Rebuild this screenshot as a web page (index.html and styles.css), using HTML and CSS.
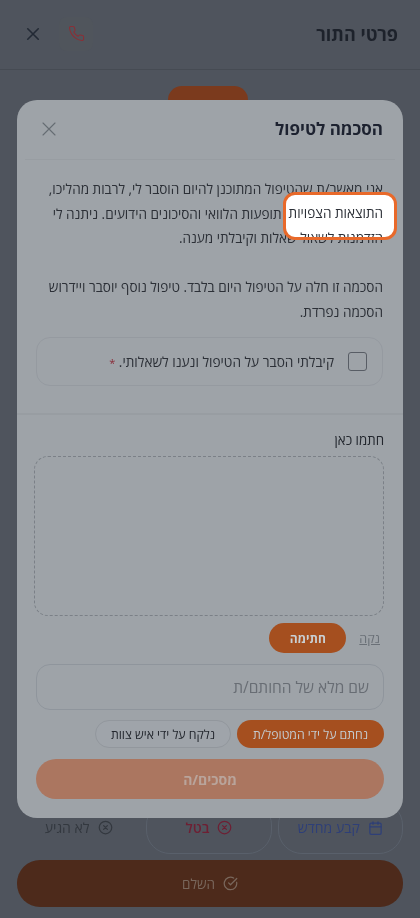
FILE: index.html
```html
<!DOCTYPE html>
<html lang="he" dir="rtl">
<head>
<meta charset="utf-8">
<title>פרטי התור</title>
<link rel="stylesheet" href="styles.css">
</head>
<body>
<div class="page">
  <header class="topbar">
    <h1 class="topbar-title">פרטי התור</h1>
    <div class="topbar-actions">
      <span class="phone-btn">
        <svg width="17" height="17" viewBox="0 0 24 24" fill="none" stroke="#8a2f36" stroke-width="1.5" stroke-linecap="round" stroke-linejoin="round"><path d="M22 16.92v3a2 2 0 0 1-2.18 2 19.8 19.8 0 0 1-8.63-3.07 19.5 19.5 0 0 1-6-6 19.8 19.8 0 0 1-3.07-8.67A2 2 0 0 1 4.11 2h3a2 2 0 0 1 2 1.72c.13.96.36 1.9.7 2.81a2 2 0 0 1-.45 2.11L8.09 9.91a16 16 0 0 0 6 6l1.27-1.27a2 2 0 0 1 2.11-.45c.91.34 1.85.57 2.81.7A2 2 0 0 1 22 16.92z"/></svg>
      </span>
      <svg class="close-top" width="14" height="14" viewBox="0 0 24 24" fill="none" stroke="#232a35" stroke-width="2.8" stroke-linecap="round"><path d="M3 3l18 18M21 3L3 21"/></svg>
    </div>
  </header>
  <main class="under">
    <div class="status-pill"></div>
    <div class="spacer"></div>
    <div class="action-row">
      <span class="action action-blue">
        <svg width="15" height="16" viewBox="0 0 24 24" fill="none" stroke="currentColor" stroke-width="2" stroke-linecap="round" stroke-linejoin="round"><rect x="3" y="4" width="18" height="18" rx="2"/><path d="M16 2v4M8 2v4M3 10h18"/></svg>
        קבע מחדש
      </span>
      <span class="action action-red">
        <svg width="15" height="15" viewBox="0 0 24 24" fill="none" stroke="currentColor" stroke-width="2" stroke-linecap="round"><circle cx="12" cy="12" r="10"/><path d="M15 9l-6 6M9 9l6 6"/></svg>
        בטל
      </span>
      <span class="action action-plain">
        <svg width="15" height="15" viewBox="0 0 24 24" fill="none" stroke="currentColor" stroke-width="2" stroke-linecap="round"><circle cx="12" cy="12" r="10"/><path d="M15 9l-6 6M9 9l6 6"/></svg>
        לא הגיע
      </span>
    </div>
    <div class="pay-btn">
      <svg width="15" height="15" viewBox="0 0 24 24" fill="none" stroke="currentColor" stroke-width="2" stroke-linecap="round" stroke-linejoin="round"><path d="M21.8 10A10 10 0 1 1 17 3.3"/><path d="M9 11l3 3L22 4"/></svg>
      השלם
    </div>
  </main>

  <section class="modal">
    <div class="modal-head">
      <h2 class="modal-title">הסכמה לטיפול</h2>
      <svg width="16" height="16" viewBox="0 0 24 24" fill="none" stroke="#666c73" stroke-width="1.7" stroke-linecap="round"><path d="M3 3l18 18M21 3L3 21"/></svg>
    </div>
    <div class="consent">
      <p class="consent-text">אני מאשר/ת שהטיפול המתוכנן להיום הוסבר לי, לרבות מהליכו, התוצאות הצפויות, תופעות הלוואי והסיכונים הידועים. ניתנה לי הזדמנות לשאול שאלות וקיבלתי מענה.</p>
      <p class="consent-text">הסכמה זו חלה על הטיפול היום בלבד. טיפול נוסף יוסבר ויידרוש הסכמה נפרדת.</p>
      <label class="check-card">
        <span class="checkbox"></span>
        <span class="check-label">קיבלתי הסבר על הטיפול ונענו לשאלותי. <span class="star">*</span></span>
      </label>
    </div>
    <div class="sign">
      <div class="sign-label">חתמו כאן</div>
      <div class="sign-pad"></div>
      <div class="sign-actions">
        <span class="clear">נקה</span>
        <span class="sign-btn">חתימה</span>
      </div>
      <div class="name-input">שם מלא של החותם/ת</div>
      <div class="chips">
        <span class="chip chip-on">נחתם על ידי המטופל/ת</span>
        <span class="chip chip-off">נלקח על ידי איש צוות</span>
      </div>
      <div class="agree">מסכים/ה</div>
    </div>
  </section>

  <div class="spotlight">
    <div class="spotlight-text">התוצאות הצפויות<br>הזדמנות לשאול</div>
  </div>
</div>
</body>
</html>
```
FILE: styles.css
```css
* { box-sizing: border-box; margin: 0; padding: 0; }
html, body { width: 420px; height: 918px; overflow: hidden; }
body {
  font-family: "Open Sans", "Noto Sans", "Liberation Sans", sans-serif;
  background: #4f545d;
  color: #23272e;
}
.page {
  position: relative;
  width: 420px; height: 918px;
  display: flex; flex-direction: column;
  filter: blur(0.4px);
}

.topbar {
  height: 70px;
  display: flex;
  align-items: center;
  justify-content: space-between;
  padding: 0 22px 2px 26px;
  border-bottom: 1px solid #464b53;
}
.topbar-title { font-size: 18px; font-weight: 700; color: #1d222b; }
.topbar-actions { display: flex; align-items: center; gap: 19px; }
.phone-btn {
  width: 34px; height: 34px;
  display: flex; align-items: center; justify-content: center;
  background: #50555c;
  border-radius: 8px;
}
.close-top { display: block; }

.under { flex: 1; display: flex; flex-direction: column; padding: 16px 17px 11px; }
.status-pill {
  align-self: center;
  width: 80px; height: 40px;
  margin-inline-start: 5px;
  border-radius: 14px;
  background: #7b3a1d;
}
.spacer { flex: 1; }
.action-row { display: flex; gap: 6px; margin-bottom: 6px; }
.action {
  flex: 1; height: 53px;
  display: flex; align-items: center; justify-content: center; gap: 8px;
  border-radius: 24px;
  font-size: 14px; font-weight: 500;
}
.action-blue { color: #2e3f78; border: 1px solid #59606b; }
.action-red { color: #6e1f33; border: 1px solid #59606b; font-weight: 600; }
.action-plain { color: #33383f; }
.pay-btn {
  height: 47px;
  display: flex; align-items: center; justify-content: center; gap: 8px;
  background: #4d2a1b;
  border-radius: 23px;
  color: #79675c;
  font-size: 13.5px; font-weight: 500;
}

.modal {
  position: absolute;
  top: 100px; left: 17px;
  width: 386px; height: 718px;
  background: #9ea3a8;
  border-radius: 20px;
  display: flex; flex-direction: column;
  overflow: hidden;
}
.modal-head {
  height: 60px;
  display: flex; align-items: center; justify-content: space-between;
  margin: 0 8px;
  padding: 0 12px 2px 16px;
  border-bottom: 1px solid #989da2;
}
.modal-title { font-size: 17px; font-weight: 700; color: #1d2230; }

.consent { padding: 17px 20px 0 19px; height: 255px; border-bottom: 2px solid #989da2; }
.consent-text { font-size: 13.55px; line-height: 24.5px; color: #2c3037; margin-bottom: 24.5px; }
.consent-text + .consent-text { margin-bottom: 13px; }
.check-card {
  height: 49px;
  display: flex; align-items: center; gap: 14px;
  padding: 0 15px 0 17px;
  border: 1px solid #959aa0;
  border-radius: 14px;
  font-size: 13.65px; color: #2c3037;
}
.checkbox { width: 19px; height: 19px; flex: none; border: 1.5px solid #585d65; border-radius: 3px; }
.star { color: #8a2a38; font-size: 11px; }

.sign { padding: 16px 19px 0; display: flex; flex-direction: column; }
.sign-label { font-size: 13.3px; font-weight: 500; line-height: 18px; color: #23272e; margin-bottom: 7px; }
.sign-pad { height: 160px; border: 1.5px dashed #7b8087; border-radius: 14px; margin-bottom: 7px; margin-left: -2px; }
.sign-actions { display: flex; align-items: center; gap: 13px; padding-right: 4px; margin-bottom: 11px; height: 30px; }
.clear { font-size: 12.5px; color: #6a7077; text-decoration: underline; }
.sign-btn {
  width: 77px; height: 30px;
  display: flex; align-items: center; justify-content: center;
  background: #a54f1f;
  border-radius: 15px;
  color: #c9d0d4;
  font-size: 12px; font-weight: 700;
}
.name-input {
  height: 46px; line-height: 44px;
  border: 1px solid #8f959c;
  border-radius: 14px;
  padding: 0 14px;
  font-size: 15.5px; color: #686d74;
  margin-bottom: 10px;
}
.chips { display: flex; gap: 6px; margin-bottom: 11px; }
.chip {
  height: 28px; border-radius: 14px;
  display: flex; align-items: center; justify-content: center;
  font-size: 12.3px; font-weight: 500;
}
.chip-on { width: 147px; background: #a54f1f; color: #c4cace; }
.chip-off { width: 136px; background: #9fa4aa; border: 1px solid #92979d; color: #23272e; }
.agree {
  height: 40px;
  display: flex; align-items: center; justify-content: center;
  background: #ab7660;
  border-radius: 20px;
  color: #b9a49b;
  font-size: 14px; font-weight: 700;
}

.spotlight {
  position: absolute;
  top: 192px; left: 283px;
  width: 114px; height: 48px;
  background: #fff;
  border: 3px solid #e8692a;
  border-radius: 12px;
  overflow: hidden;
}
.spotlight-text {
  font-size: 13.55px; line-height: 24.5px; color: #2c3037;
  white-space: nowrap;
  padding: 6px 11px 0 0;
}
```
